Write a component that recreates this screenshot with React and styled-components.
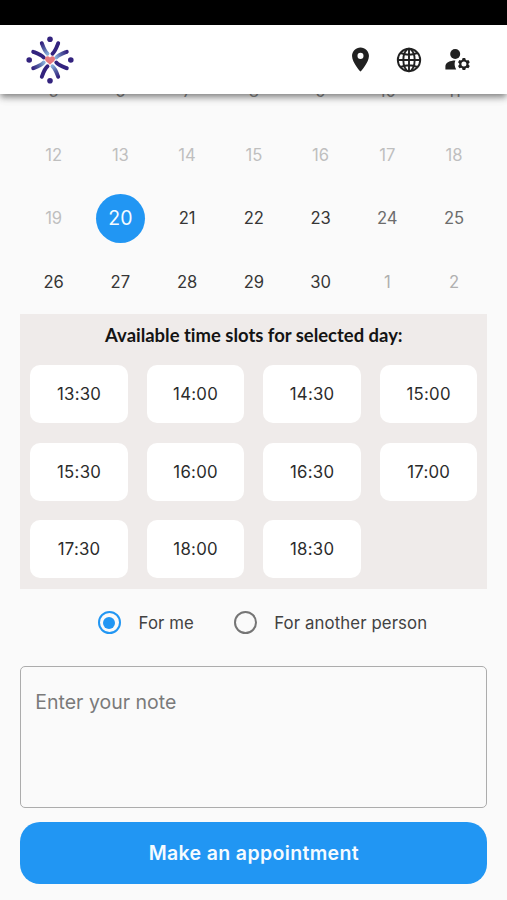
import React from "react"
import styled, { createGlobalStyle, css } from "styled-components"
import { MdLocationOn } from "react-icons/md"

const weeks = [
  [5, 6, 7, 8, 9, 10, 11],
  [12, 13, 14, 15, 16, 17, 18],
  [19, 20, 21, 22, 23, 24, 25],
  [26, 27, 28, 29, 30, 1, 2],
]

const slots = [
  "13:30",
  "14:00",
  "14:30",
  "15:00",
  "15:30",
  "16:00",
  "16:30",
  "17:00",
  "17:30",
  "18:00",
  "18:30",
]

const dayColors = {
  hidden: "#8d8d8d",
  past: "#bfbfbf",
  active: "#363636",
  weekend: "#6c6c6c",
  outside: "#b0b0b0",
  selected: "#f5fbff",
}

const dayKind = (row, col) => {
  if (row === 0) return "hidden"
  if (row === 1 || (row === 2 && col === 0)) return "past"
  if (row === 2 && col === 1) return "selected"
  if (row === 2 && col > 4) return "weekend"
  if (row === 3 && col > 4) return "outside"
  return "active"
}

const GlobalStyle = createGlobalStyle`
  * {
    box-sizing: border-box;
  }
  body {
    margin: 0;
    background: #fafafa;
    font-family: Inter, "Liberation Sans", sans-serif;
  }
`

const Screen = styled.div`
  display: flex;
  flex-direction: column;
  width: 507px;
  height: 900px;
  overflow: hidden;
  background: #fafafa;
`

const StatusBar = styled.div`
  flex: none;
  height: 25px;
  background: #000;
`

const Header = styled.header`
  position: relative;
  z-index: 1;
  flex: none;
  display: flex;
  align-items: center;
  justify-content: space-between;
  height: 69px;
  padding: 0 35px 0 24.6px;
  background: #fff;
  color: #212121;
  box-shadow: 0 3px 6px -1px rgba(0, 0, 0, 0.38),
    0 5px 7px rgba(0, 0, 0, 0.14), 0 1px 13px rgba(0, 0, 0, 0.08);
`

const Actions = styled.nav`
  display: flex;
  align-items: center;
  gap: 20px;

  svg {
    display: block;
  }
`

const Content = styled.main`
  flex: 1;
  display: flex;
  flex-direction: column;
  min-height: 0;
  padding: 0 19.6px 16px 20.3px;
`

const Calendar = styled.div`
  display: grid;
  grid-template-columns: repeat(7, 1fr);
  grid-auto-rows: 63.5px;
  flex: none;
  margin-top: -34.5px;
`

const Day = styled.div`
  display: flex;
  align-items: center;
  justify-content: center;
  color: ${props => dayColors[props.$kind]};
  font-size: 16.6px;

  span {
    display: flex;
    align-items: center;
    justify-content: center;
    width: 49px;
    height: 49px;
    border-radius: 50%;
    ${props =>
      props.$kind === "selected" &&
      css`
        background: #2196f3;
        font-size: 19.5px;
      `}
  }
`

const SlotPanel = styled.section`
  flex: none;
  height: 274.5px;
  margin-top: 0.5px;
  padding: 9px 10px;
  background: #efebea;

  h2 {
    margin: 0 0 18px;
    color: #141414;
    font: 700 18.45px/24px Lato, sans-serif;
    font-variant-ligatures: none;
    text-align: center;
  }
`

const SlotGrid = styled.div`
  display: grid;
  grid-template-columns: repeat(4, 1fr);
  grid-auto-rows: 58px;
  gap: 19.7px 19px;
`

const Slot = styled.button`
  padding: 0;
  border: 0;
  border-radius: 10px;
  background: #fff;
  color: #2b2b2b;
  font: 400 16.8px Inter, sans-serif;
  letter-spacing: 0.25px;
`

const RadioRow = styled.div`
  display: flex;
  align-items: center;
  height: 68px;
  padding-left: 77.7px;
`

const RadioLabel = styled.label`
  display: flex;
  align-items: center;
  gap: 17.6px;
  margin-right: 39.6px;
  color: #424242;
  font-size: 16.8px;
  letter-spacing: 0.1px;
  white-space: nowrap;
`

const RadioMark = styled.span`
  display: flex;
  align-items: center;
  justify-content: center;
  width: 23px;
  height: 23px;
  border: 2.4px solid ${props => (props.$checked ? "#2196f3" : "#757575")};
  border-radius: 50%;

  &::after {
    content: "";
    width: 12px;
    height: 12px;
    border-radius: 50%;
    background: ${props => (props.$checked ? "#2196f3" : "transparent")};
  }
`

const Note = styled.textarea`
  display: block;
  flex: none;
  width: 100%;
  height: 142px;
  margin: 9.4px 0 14px;
  padding: 22px 14px;
  border: 1.5px solid #acacac;
  border-radius: 5px;
  outline: 0;
  background: transparent;
  font: 400 19.5px/26px Inter, sans-serif;
  resize: none;

  &::placeholder {
    color: #7a7a7a;
    opacity: 1;
  }
`

const Submit = styled.button`
  flex: none;
  height: 62px;
  padding: 0;
  border: 0;
  border-radius: 20px;
  background: #2196f3;
  color: #f5fbff;
  font: 600 19.5px Inter, sans-serif;
  letter-spacing: 0.36px;
`

const quarters = [0, 90, 180, 270]

const Logo = () => (
  <svg width="50" height="50" viewBox="-25 -25 50 50">
    <defs>
      <linearGradient
        id="fade"
        gradientUnits="userSpaceOnUse"
        x1="-2.5"
        y1="-6"
        x2="-8"
        y2="-17"
      >
        <stop offset="0" stopColor="#86acd9" />
        <stop offset="0.45" stopColor="#5562a5" />
        <stop offset="1" stopColor="#352580" />
      </linearGradient>
    </defs>
    {quarters.map(angle => (
      <g key={angle} transform={`rotate(${angle})`}>
        <circle cy="-20.8" r="2.8" fill="#33237e" />
        <g fill="none" strokeWidth="3.9" strokeLinecap="round">
          <path d="M-8.2-16.8C-6.6-12.5-5.4-8.8-2.5-6.3" stroke="url(#fade)" />
          <path d="M8.2-16.8C6.6-12.5 5.4-8.8 2.5-6.3" stroke="#33237e" />
        </g>
      </g>
    ))}
    <path
      d="M0 4.8C-2 2.6-5 1.4-5-1.2-5-4-1.7-4.5 0-2.5 1.7-4.5 5-4 5-1.2 5 1.4 2 2.6 0 4.8Z"
      fill="#e5787e"
    />
  </svg>
)

const Globe = () => (
  <svg
    width="28"
    height="28"
    viewBox="-14 -14 28 28"
    fill="none"
    stroke="currentColor"
    strokeWidth="1.9"
  >
    <circle r="11.2" />
    <ellipse rx="5.7" ry="11.2" />
    <path d="M0-11V11M-11 0H11M-8.4-7Q0-3.6 8.4-7M-8.4 7Q0 3.6 8.4 7" />
  </svg>
)

const ManageAccount = () => (
  <svg width="29" height="29" viewBox="0 0 29 29" fill="currentColor">
    <circle cx="12.2" cy="9" r="5" />
    <path d="M12.4 15.4C11 18.3 11.6 21.4 13.2 24.4H2.4V21.2C2.4 17.4 7.5 15.3 12.4 15.4Z" />
    {/* gear: a ring with six teeth */}
    <g transform="translate(20.9 19.1)">
      {[0, 60, 120, 180, 240, 300].map(angle => (
        <path
          key={angle}
          d="M-1.3-6H1.3L2-3.4H-2Z"
          transform={`rotate(${angle})`}
        />
      ))}
      <circle r="3.5" fill="none" stroke="currentColor" strokeWidth="2" />
    </g>
  </svg>
)

const App = () => (
  <Screen>
    <GlobalStyle />
    <StatusBar />
    <Header>
      <Logo />
      <Actions>
        <MdLocationOn size={29} />
        <Globe />
        <ManageAccount />
      </Actions>
    </Header>
    <Content>
      <Calendar>
        {weeks.map((week, row) =>
          week.map((day, col) => (
            <Day key={`${row}-${day}`} $kind={dayKind(row, col)}>
              <span>{day}</span>
            </Day>
          ))
        )}
      </Calendar>
      <SlotPanel>
        <h2>Available time slots for selected day:</h2>
        <SlotGrid>
          {slots.map(slot => (
            <Slot key={slot}>{slot}</Slot>
          ))}
        </SlotGrid>
      </SlotPanel>
      <RadioRow>
        <RadioLabel>
          <RadioMark $checked />
          For me
        </RadioLabel>
        <RadioLabel>
          <RadioMark />
          For another person
        </RadioLabel>
      </RadioRow>
      <Note placeholder="Enter your note" />
      <Submit>Make an appointment</Submit>
    </Content>
  </Screen>
)

export default App
